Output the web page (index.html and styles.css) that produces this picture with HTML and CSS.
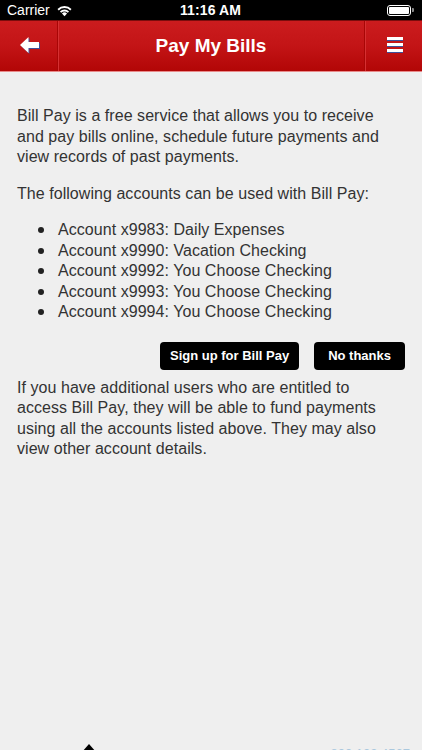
FILE: index.html
```html
<!DOCTYPE html>
<html lang="en">
<head>
    <meta charset="UTF-8">
    <meta name="viewport" content="width=device-width, initial-scale=1.0">
    <title>Pay My Bills</title>
    <link rel="stylesheet" href="styles.css">
</head>
<body>
    <div class="status-bar">
        <div class="status-left">
            <span>Carrier</span>
            <svg class="wifi" viewBox="0 0 16 12" width="17" height="13">
                <path d="M8 11.5 L5.6 8.9 A3.4 3.4 0 0 1 10.4 8.9 Z" fill="#fff"/>
                <path d="M3.7 6.9 A6.1 6.1 0 0 1 12.3 6.9 L11.1 8.2 A4.4 4.4 0 0 0 4.9 8.2 Z" fill="#fff"/>
                <path d="M1.4 4.6 A9.3 9.3 0 0 1 14.6 4.6 L13.4 5.9 A7.6 7.6 0 0 0 2.6 5.9 Z" fill="#fff"/>
            </svg>
        </div>
        <div class="status-time">11:16 AM</div>
        <div class="status-right">
            <div class="battery"><div class="battery-level"></div></div>
            <div class="battery-tip"></div>
        </div>
    </div>

    <header class="app-header">
        <a class="header-btn back" href="#">
            <svg viewBox="0 0 22 18" width="22" height="18">
                <!-- shadow copy sits one pixel down/right -->
                <path d="M1 9 L9.5 1 L9.5 6 L20 6 L20 12 L9.5 12 L9.5 17 Z" fill="#3d4f9a" transform="translate(1 1)"/>
                <path d="M1 9 L9.5 1 L9.5 6 L20 6 L20 12 L9.5 12 L9.5 17 Z" fill="#fff"/>
            </svg>
        </a>
        <h1 class="header-title">Pay My Bills</h1>
        <a class="header-btn menu" href="#">
            <span class="bar"></span>
            <span class="bar"></span>
            <span class="bar"></span>
        </a>
    </header>

    <main class="content">
        <p>Bill Pay is a free service that allows you to receive and pay bills online, schedule future payments and view records of past payments.</p>
        <p>The following accounts can be used with Bill Pay:</p>
        <ul class="accounts">
            <li>Account x9983: Daily Expenses</li>
            <li>Account x9990: Vacation Checking</li>
            <li>Account x9992: You Choose Checking</li>
            <li>Account x9993: You Choose Checking</li>
            <li>Account x9994: You Choose Checking</li>
        </ul>
        <div class="buttons">
            <a href="#" class="btn">Sign up for Bill Pay</a>
            <a href="#" class="btn decline">No thanks</a>
        </div>
        <p class="note">If you have additional users who are entitled to access Bill Pay, they will be able to fund payments using all the accounts listed above. They may also view other account details.</p>
    </main>

    <footer class="footer">
        <span class="footer-icon"></span>
        <span class="footer-phone">800.123.4567</span>
    </footer>
</body>
</html>
```

FILE: styles.css
```css
* {
    margin: 0;
    padding: 0;
    box-sizing: border-box;
}

body {
    font-family: "Liberation Sans", Arial, Helvetica, sans-serif;
    background-color: #efefef;
    color: #333;
    width: 422px;
    height: 750px;
    overflow: hidden;
}

/* status bar */
.status-bar {
    height: 20px;
    background: #000;
    color: #fff;
    font-size: 14px;
    display: flex;
    align-items: center;
    justify-content: space-between;
    padding: 0 8px 0 7px;
}

.status-left {
    display: flex;
    align-items: center;
    gap: 6px;
    width: 100px;
}

.status-time {
    font-weight: 600;
    letter-spacing: 0.1px;
}

.status-right {
    display: flex;
    align-items: center;
    justify-content: flex-end;
    width: 100px;
}

.battery {
    width: 24px;
    height: 11px;
    border: 1px solid #fff;
    border-radius: 3px;
    padding: 1px;
}

.battery-level {
    width: 100%;
    height: 100%;
    background: #fff;
    border-radius: 1px;
}

.battery-tip {
    width: 2px;
    height: 4px;
    background: #888;
    border-radius: 0 1px 1px 0;
    margin-left: 1px;
}

/* red title bar */
.app-header {
    height: 52px;
    display: flex;
    background: linear-gradient(to bottom, #cb1c1e 0%, #c31416 50%, #b20606 100%);
    border-top: 1px solid #7a0c0c;
    border-bottom: 1px solid #e88a8a;
}

.header-btn {
    width: 58px;
    display: flex;
    align-items: center;
    justify-content: center;
    text-decoration: none;
}

.header-btn.back {
    border-right: 1px solid #a80606;
    box-shadow: 1px 0 0 #d63032;
    padding: 0 0 2px 3px;
}

.header-btn.menu {
    border-left: 1px solid #a80606;
    box-shadow: inset 1px 0 0 #d63032;
    flex-direction: column;
    gap: 2px;
    padding: 0 0 3px 2px;
}

.bar {
    display: block;
    width: 16px;
    height: 4px;
    background: #fff;
    border-bottom: 1px solid #3d4f9a;
}

.header-title {
    flex: 1;
    color: #fff;
    font-size: 19px;
    font-weight: 700;
    text-align: center;
    line-height: 50px;
}

/* page body */
.content {
    padding: 34px 33px 0 17px;
    font-size: 16px;
    line-height: 20.5px;
    letter-spacing: 0.05px;
}

.content p {
    margin-bottom: 16px;
}

.accounts {
    list-style: none;
    margin-bottom: 19px;
    margin-right: -16px;
}

.accounts li {
    display: flex;
    align-items: center;
    padding-left: 21px;
}

.accounts li::before {
    content: "";
    width: 6px;
    height: 6px;
    border-radius: 50%;
    background: #222;
    margin-right: 14px;
}

.buttons {
    display: flex;
    justify-content: flex-end;
    gap: 15px;
    margin-right: -16px;
    margin-bottom: 8px;
}

.btn {
    display: inline-block;
    height: 28px;
    line-height: 28px;
    padding: 0 10px;
    background: #000;
    color: #fff;
    font-size: 13px;
    font-weight: 700;
    letter-spacing: 0;
    text-decoration: none;
    border-radius: 4px;
}

.btn.decline {
    padding: 0 14px;
}

.content .note {
    margin-bottom: 0;
}

/* footer, mostly below the fold */
.footer {
    margin-top: 286px;
    display: flex;
    justify-content: space-between;
    align-items: flex-start;
    padding: 0 12px 0 82px;
}

.footer-icon {
    width: 0;
    height: 0;
    border-left: 7px solid transparent;
    border-right: 7px solid transparent;
    border-bottom: 8px solid #000;
    margin-top: -2px;
}

.footer-phone {
    color: #aac8de;
    font-size: 13px;
    line-height: 13px;
    margin-top: 1px;
}
```
